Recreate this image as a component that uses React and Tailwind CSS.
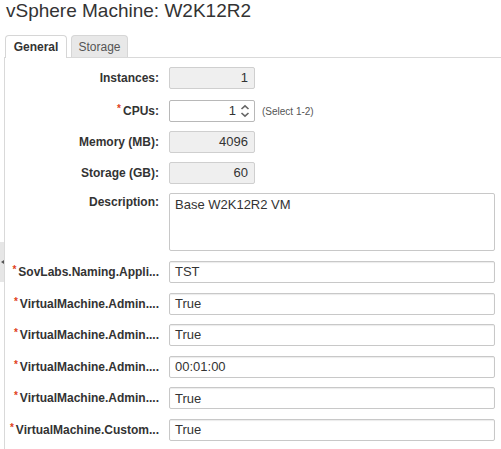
import React from "react";

const Star = () => <span className="text-[#e0401c] text-[10px] mr-[2px] relative -top-[3px] font-bold">*</span>;

function Row({ label, req, children, top = "items-center" }) {
  return (
    <div className={`flex ${top}`}>
      <div className="w-[164px] shrink-0 text-right pr-[10px] font-bold text-[12px] text-[#333] whitespace-nowrap">
        {req && <Star />}
        {label}
      </div>
      {children}
    </div>
  );
}

const ro = "w-[86px] h-[22px] border border-[#cfcfcf] bg-[#efefef] rounded-[2px] text-right pr-[6px] text-[13px] text-[#333] flex items-center justify-end";
const txt = "w-[326px] h-[22px] border border-[#c8c8c8] shadow-[inset_0_1px_1px_rgba(0,0,0,0.08)] rounded-[2px] bg-white text-[13px] text-[#333] pl-[5px] flex items-center";

export default function App() {
  return (
    <div className="w-[501px] h-[449px] bg-white overflow-hidden relative" style={{ fontFamily: '"Liberation Sans", Arial, sans-serif' }}>
      <div className="absolute left-0 top-[242px] w-[4px] h-[40px] bg-[#e6e6e6] flex items-center justify-center">
        <div className="w-0 h-0 border-t-[2px] border-b-[2px] border-r-[3px] border-t-transparent border-b-transparent border-r-[#555]" />
      </div>
      <div className="pl-[6px] pt-[0px] text-[19px] text-[#333] leading-[22px]">vSphere Machine: W2K12R2</div>
      <div className="pl-[5px] mt-[12px] flex items-end h-[23px]">
        <div className="h-[23px] w-[62px] border border-b-0 border-[#d6d6d6] rounded-t-[4px] bg-white flex items-center justify-center font-bold text-[12px] text-[#333] relative z-10 -mb-[1px] pb-[1px]">General</div>
        <div className="ml-[4px] h-[22px] w-[57px] border border-[#d6d6d6] border-b-0 rounded-t-[4px] bg-[#e8e8e8] flex items-center justify-center text-[12px] text-[#555]">Storage</div>
      </div>
      <div className="ml-[4px] border-l border-t border-[#d9d9d9] pt-[9px] flex flex-col h-[400px]">
        <Row label="Instances:"><div className={ro}>1</div></Row>
        <div className="mt-[11px]">
          <Row label="CPUs:" req>
            <div className="w-[86px] h-[22px] border border-[#b8b8b8] rounded-[2px] bg-white text-[13px] text-[#333] flex items-center justify-end pr-[4px]">
              <span className="mr-[4px]">1</span>
              <svg width="10" height="14" viewBox="0 0 10 14" fill="none" stroke="#666" strokeWidth="1.6">
                <path d="M1.5 5 L5 1.8 L8.5 5" />
                <path d="M1.5 9 L5 12.2 L8.5 9" />
              </svg>
            </div>
            <span className="ml-[7px] text-[10px] text-[#555]">(Select 1-2)</span>
          </Row>
        </div>
        <div className="mt-[9px]"><Row label="Memory (MB):"><div className={ro}>4096</div></Row></div>
        <div className="mt-[9px]"><Row label="Storage (GB):"><div className={ro}>60</div></Row></div>
        <div className="mt-[9px]">
          <Row label="Description:" top="items-start">
            <div className="w-[326px] h-[58px] border border-[#c8c8c8] rounded-[2px] bg-white text-[13px] text-[#333] pl-[5px] pt-[3px] leading-[15px]">Base W2K12R2 VM</div>
          </Row>
        </div>
        <div className="mt-[10px] flex flex-col gap-[9.6px]">
          <Row label="SovLabs.Naming.Appli..." req><div className={txt}>TST</div></Row>
          <Row label="VirtualMachine.Admin...." req><div className={txt}>True</div></Row>
          <Row label="VirtualMachine.Admin...." req><div className={txt}>True</div></Row>
          <Row label="VirtualMachine.Admin...." req><div className={txt}>00:01:00</div></Row>
          <Row label="VirtualMachine.Admin...." req><div className={txt}>True</div></Row>
          <Row label="VirtualMachine.Custom..." req><div className={txt}>True</div></Row>
        </div>
      </div>
    </div>
  );
}
